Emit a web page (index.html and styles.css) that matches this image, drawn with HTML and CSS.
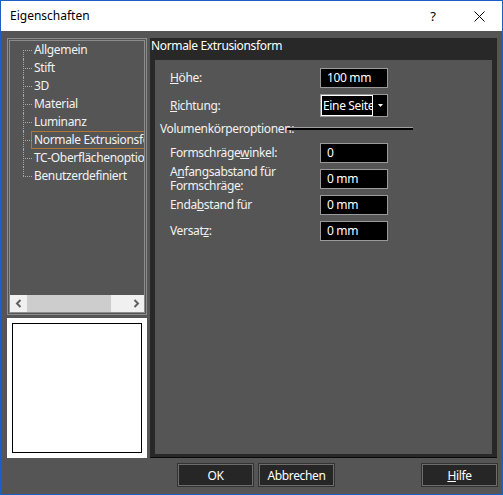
FILE: index.html
```html
<!DOCTYPE html>
<html lang="de">
<head>
<meta charset="UTF-8" />
<title>Eigenschaften</title>
<link rel="stylesheet" href="styles.css">
</head>
<body>

  <div class="window">
    <div class="titlebar">
      <span class="title">Eigenschaften</span>
      <span class="caption-btn help">?</span>
      <span class="caption-btn close">
        <svg width="11" height="11" viewBox="0 0 11 11"><path d="M0.5 0.5 L10.5 10.5 M10.5 0.5 L0.5 10.5" stroke="#000" stroke-width="1" fill="none"/></svg>
      </span>
    </div>

    <div class="dialog">
      <div class="panels">
        <div class="left">
          <div class="tree">
            <ul class="tree-list">
              <li><span class="node">Allgemein</span></li>
              <li><span class="node">Stift</span></li>
              <li><span class="node">3D</span></li>
              <li><span class="node">Material</span></li>
              <li><span class="node">Luminanz</span></li>
              <li><span class="node selected">Normale Extrusionsform</span></li>
              <li><span class="node">TC-Oberflächenoptionen</span></li>
              <li><span class="node">Benutzerdefiniert</span></li>
            </ul>
            <div class="hscroll">
              <span class="arrow">
                <svg width="8" height="9" viewBox="0 0 8 9"><path d="M5.5 1 L2 4.5 L5.5 8" stroke="#606060" stroke-width="2" fill="none"/></svg>
              </span>
              <span class="thumb"></span>
              <span class="track"></span>
              <span class="arrow">
                <svg width="8" height="9" viewBox="0 0 8 9"><path d="M2.5 1 L6 4.5 L2.5 8" stroke="#606060" stroke-width="2" fill="none"/></svg>
              </span>
            </div>
          </div>
          <div class="preview">
            <div class="preview-frame"></div>
          </div>
        </div>

        <div class="page">
          <div class="page-title">Normale Extrusionsform</div>
          <div class="page-body">
            <div class="row">
              <label class="field-label"><u>H</u>öhe:</label>
              <div class="field">100 mm</div>
            </div>
            <div class="row row-select">
              <label class="field-label"><u>R</u>ichtung:</label>
              <div class="combo">
                <span class="combo-text">Eine Seite</span>
                <span class="combo-btn">
                  <svg width="5" height="3" viewBox="0 0 5 3"><path d="M0 0 H5 L2.5 3 Z" fill="#fff"/></svg>
                </span>
              </div>
            </div>
            <div class="group">
              <span class="group-label">Volumenkörperoptionen:</span>
              <span class="group-line"></span>
            </div>
            <div class="row">
              <label class="field-label">Formschräge<u>w</u>inkel:</label>
              <div class="field">0</div>
            </div>
            <div class="row">
              <label class="field-label">A<u>n</u>fangsabstand für Formschräge:</label>
              <div class="field">0 mm</div>
            </div>
            <div class="row">
              <label class="field-label">Enda<u>b</u>stand für</label>
              <div class="field">0 mm</div>
            </div>
            <div class="row">
              <label class="field-label">Versat<u>z</u>:</label>
              <div class="field">0 mm</div>
            </div>
          </div>
        </div>
      </div>

      <div class="buttons">
        <button>OK</button>
        <button>Abbrechen</button>
        <button class="help-btn"><u>H</u>ilfe</button>
      </div>
    </div>
  </div>

</body>
</html>
```

FILE: styles.css
```css
html, body {
  margin: 0;
  padding: 0;
  background: #555555;
  font-family: 'Noto Sans', 'Open Sans', sans-serif;
  font-size: 12px;
  color: #f2f2f2;
}

.window {
  width: 503px;
  height: 495px;
  box-sizing: border-box;
  border: 1px solid #1e5fc4;
  display: flex;
  flex-direction: column;
  background: #555555;
}

/* title bar */
.titlebar {
  height: 30px;
  flex: none;
  background: #fff;
  color: #000;
  display: flex;
  align-items: center;
  padding-left: 9px;
}

.title {
  line-height: 16px;
  margin-top: -1px;
}

.caption-btn {
  width: 46px;
  height: 30px;
  display: flex;
  align-items: center;
  justify-content: center;
  font-size: 13px;
}

.help {
  margin-left: auto;
}

/* dialog */
.dialog {
  flex: 1;
  display: flex;
  flex-direction: column;
  padding: 7px 5px 8px 6px;
  letter-spacing: -0.35px;
}

.panels {
  display: flex;
  gap: 3px;
  height: 420px;
}

.left {
  width: 140px;
  display: flex;
  flex-direction: column;
  gap: 3px;
}

.tree {
  height: 277px;
  box-sizing: border-box;
  border: 3px double #8c8c8c;
  display: flex;
  flex-direction: column;
}

.tree-list {
  list-style: none;
  margin: 0;
  padding: 0;
  flex: 1;
  overflow: hidden;
}

.tree-list li {
  position: relative;
  height: 18px;
  padding-left: 21px;
  white-space: nowrap;
}

.tree-list li::before {
  content: '';
  position: absolute;
  left: 13px;
  top: 9px;
  width: 9px;
  border-top: 1px dotted #a8a8a8;
}

.tree-list li::after {
  content: '';
  position: absolute;
  left: 13px;
  top: 0;
  height: 18px;
  border-left: 1px dotted #a8a8a8;
}

.tree-list li:first-child::after {
  top: 9px;
  height: 9px;
}

.tree-list li:last-child::after {
  height: 9px;
}

.node {
  display: inline-block;
  height: 16px;
  line-height: 16px;
  padding: 0 40px 0 2px;
  border: 1px solid transparent;
}

.node.selected {
  border-color: #b07636;
}

.hscroll {
  height: 17px;
  flex: none;
  display: flex;
  background: #f0f0f0;
}

.hscroll .arrow {
  width: 17px;
  display: flex;
  align-items: center;
  justify-content: center;
}

.hscroll .thumb {
  width: 84px;
  background: #cdcdcd;
}

.hscroll .track {
  flex: 1;
}

.preview {
  height: 140px;
  background: #fff;
  padding: 5px;
  box-sizing: border-box;
}

.preview-frame {
  height: 100%;
  border: 1px solid #000;
  box-sizing: border-box;
}

/* property page */
.page {
  width: 347px;
  background: #282828;
  border-bottom: 1px solid #0a0a0a;
  box-sizing: border-box;
  display: flex;
  flex-direction: column;
}

.page-title {
  height: 22px;
  line-height: 16px;
  padding-left: 1px;
  color: #fff;
}

.page-body {
  flex: 1;
  margin: 0 5px 3px 5px;
  background: #555555;
  padding: 8px 0 0 15px;
}

.row {
  display: flex;
  align-items: center;
  height: 20px;
  margin-bottom: 6px;
}

.row-select {
  height: 23px;
  margin-bottom: 0;
}

.field-label {
  width: 150px;
  line-height: 14px;
}

.field {
  width: 68px;
  height: 20px;
  box-sizing: border-box;
  background: #000;
  border: 1px solid #9a9a9a;
  padding-left: 6px;
  line-height: 17px;
  color: #fff;
}

.combo {
  width: 68px;
  height: 23px;
  box-sizing: border-box;
  border: 1px solid #9a9a9a;
  background: #000;
  display: flex;
}

.combo-text {
  width: 52px;
  box-sizing: border-box;
  border: 1px solid #fff;
  padding-left: 1px;
  line-height: 19px;
  overflow: hidden;
  white-space: nowrap;
  color: #fff;
}

.combo-btn {
  flex: 1;
  display: flex;
  align-items: center;
  justify-content: center;
}

.group {
  display: flex;
  align-items: center;
  height: 22px;
  margin: 0 0 4px -10px;
}

.group-label {
  width: 127px;
  flex: none;
  white-space: nowrap;
}

.group-line {
  width: 126px;
  height: 2px;
  background: #000;
  border-top: 1px solid #a0a0a0;
}

/* footer buttons */
.buttons {
  display: flex;
  gap: 6px;
  margin-top: 6px;
  padding-left: 171px;
}

button {
  width: 75px;
  height: 22px;
  background: #262626;
  border: 1px solid #6c6c6c;
  box-shadow: 0 0 0 1px #333;
  color: #fff;
  font-family: inherit;
  font-size: 12px;
  letter-spacing: inherit;
  padding: 0;
}

.help-btn {
  margin-left: auto;
}
```
